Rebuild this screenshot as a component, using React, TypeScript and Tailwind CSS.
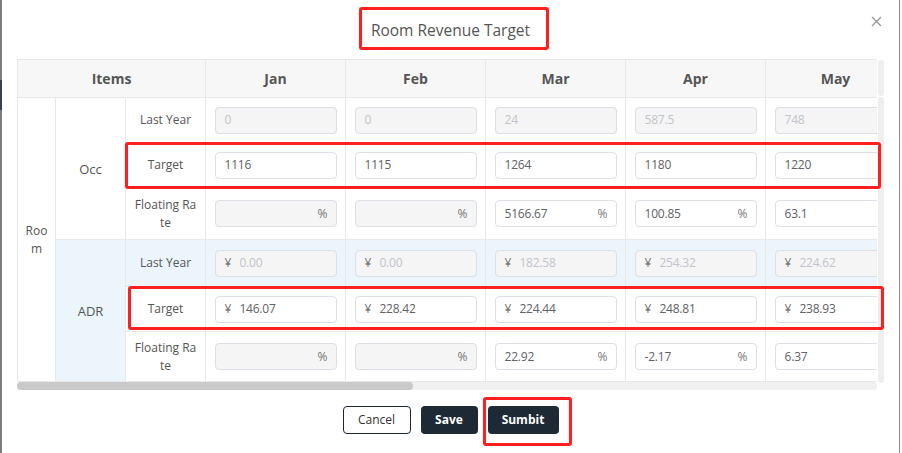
import React from 'react';

const months = ['Jan', 'Feb', 'Mar', 'Apr', 'May', 'Jun', 'Jul', 'Aug', 'Sep', 'Oct', 'Nov', 'Dec'];

interface Cell {
    value: string;
    disabled?: boolean;
}

const occLast: Cell[] = ['0', '0', '24', '587.5', '748', '812', '905', '960', '701', '688', '540', '610'].map((v) => ({ value: v, disabled: true }));
const occTarget: Cell[] = ['1116', '1115', '1264', '1180', '1220', '1230', '1300', '1320', '1210', '1200', '1150', '1180'].map((v) => ({ value: v }));
const occRate: Cell[] = [
    { value: '', disabled: true },
    { value: '', disabled: true },
    { value: '5166.67' },
    { value: '100.85' },
    { value: '63.1' },
    { value: '51.48' },
    { value: '43.65' },
    { value: '37.5' },
    { value: '72.61' },
    { value: '74.42' },
    { value: '112.96' },
    { value: '93.44' },
];
const adrLast: Cell[] = ['0.00', '0.00', '182.58', '254.32', '224.62', '231.10', '240.55', '246.80', '228.14', '219.37', '205.66', '210.02'].map((v) => ({ value: v, disabled: true }));
const adrTarget: Cell[] = ['146.07', '228.42', '224.44', '248.81', '238.93', '240.12', '252.30', '258.00', '236.75', '228.60', '212.40', '218.90'].map((v) => ({ value: v }));
const adrRate: Cell[] = [
    { value: '', disabled: true },
    { value: '', disabled: true },
    { value: '22.92' },
    { value: '-2.17' },
    { value: '6.37' },
    { value: '3.90' },
    { value: '4.88' },
    { value: '4.54' },
    { value: '3.77' },
    { value: '4.21' },
    { value: '3.28' },
    { value: '4.23' },
];

function Field({ cell, prefix, suffix }: { cell: Cell; prefix?: boolean; suffix?: boolean }) {
    return (
        <div
            className={`mx-auto flex h-[27px] w-[122px] items-center rounded-[4px] border border-[#dcdfe6] pl-[9px] pr-[8px] text-[12px] ${
                cell.disabled ? 'bg-[#f5f5f5] text-[#c0c4cc]' : 'bg-white text-[#606266]'
            }`}
        >
            {prefix && <span className="mr-[8px] text-[#777]">¥</span>}
            <span className="flex-1 tracking-[-0.2px]">{cell.value}</span>
            {suffix && <span className="text-[#777]">%</span>}
        </div>
    );
}

const td = 'border border-[#e8e8e8] px-0 align-middle';
const label = 'border border-[#e8e8e8] text-center align-middle text-[12px] leading-[18px] text-[#555]';

function RedBox({ className }: { className: string }) {
    return <div className={`pointer-events-none absolute rounded-[3px] border-[3px] border-[#ff1f1f] ${className}`} />;
}

export default function App() {
    return (
        <div
            className="relative flex h-[453px] w-[902px] overflow-hidden bg-white"
            style={{ fontFamily: '"Open Sans", "Noto Sans", Arial, sans-serif' }}
        >
            <div className="flex w-[2px] flex-col">
                <div className="h-[80px] bg-[#7d7d7d]" />
                <div className="h-[30px] bg-[#34434f]" />
                <div className="flex-1 bg-[#7d7d7d]" />
            </div>

            <div className="flex w-[898px] flex-col border-r border-[#8c8c8c]">
                {/* Header */}
                <div className="relative flex h-[59px] items-center justify-center">
                    <h3 className="pt-[3px] text-[15.5px] text-[#555]">Room Revenue Target</h3>
                    <button className="absolute right-[17px] top-[16px] text-[#999]">
                        <svg width="11" height="11" viewBox="0 0 11 11" fill="none" stroke="currentColor" strokeWidth="1.3">
                            <path d="M1 1L10 10M10 1L1 10" />
                        </svg>
                    </button>
                </div>

                {/* Table */}
                <div className="flex px-[15px]">
                    <div className="flex w-[860px] flex-col">
                        <div className="w-[860px] overflow-hidden">
                            <table className="table-fixed border-collapse" style={{ width: 188 + months.length * 140 }}>
                                <colgroup>
                                    <col className="w-[38px]" />
                                    <col className="w-[70px]" />
                                    <col className="w-[80px]" />
                                    {months.map((m) => (
                                        <col key={m} className="w-[140px]" />
                                    ))}
                                </colgroup>
                                <thead>
                                    <tr className="h-[38px] bg-[#f7f7f7]">
                                        <th colSpan={3} className="border border-[#e8e8e8] text-center text-[14px] font-bold text-[#555]">
                                            Items
                                        </th>
                                        {months.map((m) => (
                                            <th key={m} className="border border-[#e8e8e8] text-center text-[14px] font-bold text-[#555]">
                                                {m}
                                            </th>
                                        ))}
                                    </tr>
                                </thead>
                                <tbody>
                                    <tr className="h-[45px]">
                                        <td rowSpan={6} className={label}>
                                            Roo
                                            <br />m
                                        </td>
                                        <td rowSpan={3} className={`${label} text-[13px]`}>
                                            Occ
                                        </td>
                                        <td className={label}>Last Year</td>
                                        {occLast.map((c, i) => (
                                            <td key={i} className={td}>
                                                <Field cell={c} />
                                            </td>
                                        ))}
                                    </tr>
                                    <tr className="h-[45px]">
                                        <td className={label}>Target</td>
                                        {occTarget.map((c, i) => (
                                            <td key={i} className={td}>
                                                <Field cell={c} />
                                            </td>
                                        ))}
                                    </tr>
                                    <tr className="h-[52px]">
                                        <td className={label}>
                                            Floating Ra
                                            <br />
                                            te
                                        </td>
                                        {occRate.map((c, i) => (
                                            <td key={i} className={td}>
                                                <Field cell={c} suffix />
                                            </td>
                                        ))}
                                    </tr>
                                    <tr className="h-[47px] bg-[#ecf5fc]">
                                        <td rowSpan={3} className={`${label} text-[13px]`}>
                                            ADR
                                        </td>
                                        <td className={label}>Last Year</td>
                                        {adrLast.map((c, i) => (
                                            <td key={i} className={td}>
                                                <Field cell={c} prefix />
                                            </td>
                                        ))}
                                    </tr>
                                    <tr className="h-[45px]">
                                        <td className={label}>Target</td>
                                        {adrTarget.map((c, i) => (
                                            <td key={i} className={td}>
                                                <Field cell={c} prefix />
                                            </td>
                                        ))}
                                    </tr>
                                    <tr className="h-[50px]">
                                        <td className={label}>
                                            Floating Ra
                                            <br />
                                            te
                                        </td>
                                        {adrRate.map((c, i) => (
                                            <td key={i} className={td}>
                                                <Field cell={c} suffix />
                                            </td>
                                        ))}
                                    </tr>
                                </tbody>
                            </table>
                        </div>
                        {/* horizontal scrollbar */}
                        <div className="h-[8px] w-[860px] rounded-[4px] bg-[#f0f0f0]">
                            <div className="h-[8px] w-[396px] rounded-[4px] bg-[#c9c9c9]" />
                        </div>
                    </div>
                    {/* vertical scrollbar */}
                    <div className="ml-[1px] flex w-[8px] flex-col gap-[1px] pt-[1px]">
                        <div className="h-[36px] rounded-[4px] bg-[#efefef]" />
                        <div className="h-[286px] rounded-[4px] bg-[#efefef]" />
                    </div>
                </div>

                {/* Footer */}
                <div className="flex justify-center gap-[10px] pt-[16px]">
                    <button className="h-[28px] w-[68px] rounded-[4px] border border-[#1d2935] bg-white text-[12px] text-[#333]">
                        Cancel
                    </button>
                    <button className="h-[28px] w-[57px] rounded-[4px] bg-[#1d2935] text-[12px] font-bold text-white">
                        Save
                    </button>
                    <button className="h-[28px] w-[71px] rounded-[4px] bg-[#1d2935] text-[12px] font-bold text-white">
                        Sumbit
                    </button>
                </div>
            </div>

            {/* annotation boxes */}
            <RedBox className="left-[359px] top-[7px] h-[43px] w-[190px]" />
            <RedBox className="left-[125px] top-[142px] h-[47px] w-[756px]" />
            <RedBox className="left-[128px] top-[286px] h-[44px] w-[756px]" />
            <RedBox className="left-[483px] top-[397px] h-[49px] w-[89px]" />
        </div>
    );
}
